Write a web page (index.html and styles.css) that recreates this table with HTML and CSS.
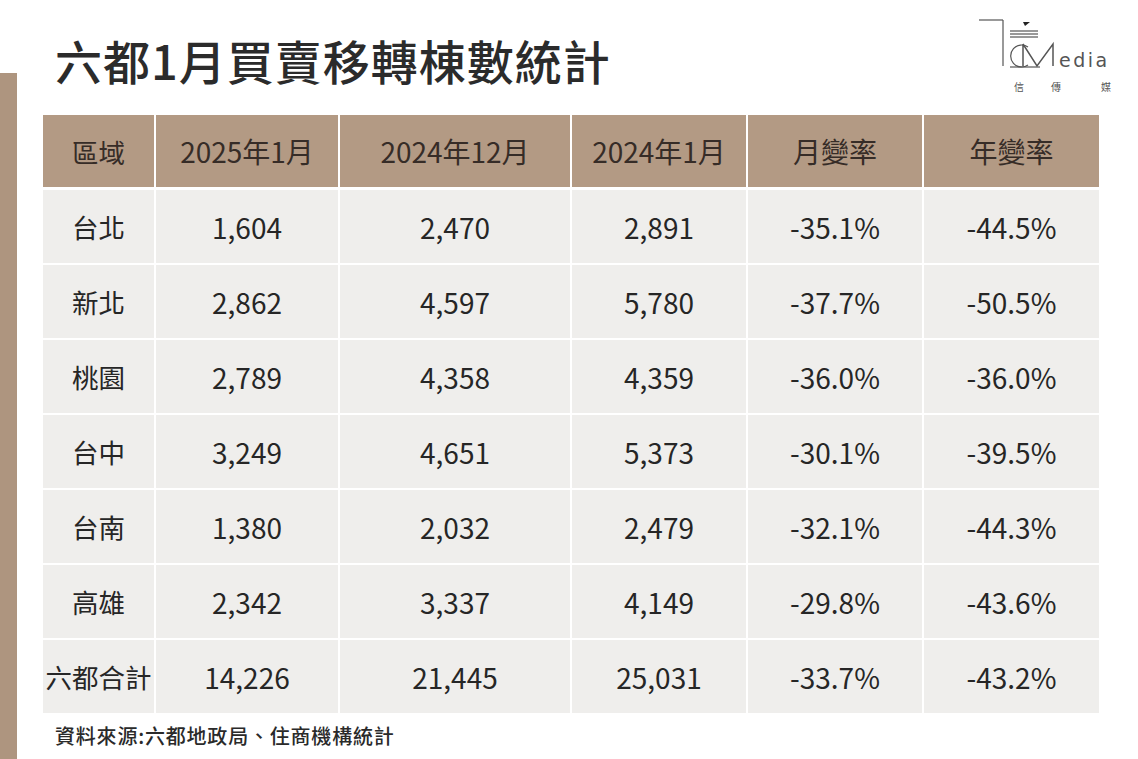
FILE: index.html
```html
<!DOCTYPE html>
<html lang="zh-Hant">
<head>
<meta charset="utf-8">
<title>六都1月買賣移轉棟數統計</title>
<link rel="stylesheet" href="styles.css">
</head>
<body>
<div class="page">
  <div class="side-bar"></div>
  <main class="main">
    <header class="head">
      <h1 class="title">六都1月買賣移轉棟數統計</h1>
      <div class="logo">
        <svg width="140" height="82" viewBox="0 0 140 82" xmlns="http://www.w3.org/2000/svg">
          <g stroke="#555" fill="none" stroke-width="1.2">
            <line x1="3" y1="7" x2="27" y2="7"/>
            <line x1="27" y1="7" x2="27" y2="53"/>
            <line x1="34" y1="18" x2="62" y2="18"/>
            <line x1="34" y1="21" x2="62" y2="21"/>
            <line x1="34" y1="24" x2="62" y2="24"/>
            <path d="M52 34 A11 11 0 1 0 52 52"/>
            <path d="M47 31 L47 53 M47 31 L61 53 L77 31 L77 53" stroke-width="1.5"/>
            <line x1="34" y1="54" x2="64" y2="54"/>
          </g>
          <path d="M47 9 L54 9 L49 13 Z" fill="#222"/>
          <text x="83" y="54" class="logo-en">edia</text>
          <text x="38" y="78" class="logo-zh">信</text>
          <text x="75" y="78" class="logo-zh">傳</text>
          <text x="125" y="78" class="logo-zh">媒</text>
        </svg>
      </div>
    </header>
    <table class="stats">
      <colgroup>
        <col class="c-area"><col class="c-a"><col class="c-b"><col class="c-c"><col class="c-d"><col class="c-e">
      </colgroup>
      <thead>
        <tr><th>區域</th><th>2025年1月</th><th>2024年12月</th><th>2024年1月</th><th>月變率</th><th>年變率</th></tr>
      </thead>
      <tbody>
        <tr><td>台北</td><td>1,604</td><td>2,470</td><td>2,891</td><td>-35.1%</td><td>-44.5%</td></tr>
        <tr><td>新北</td><td>2,862</td><td>4,597</td><td>5,780</td><td>-37.7%</td><td>-50.5%</td></tr>
        <tr><td>桃園</td><td>2,789</td><td>4,358</td><td>4,359</td><td>-36.0%</td><td>-36.0%</td></tr>
        <tr><td>台中</td><td>3,249</td><td>4,651</td><td>5,373</td><td>-30.1%</td><td>-39.5%</td></tr>
        <tr><td>台南</td><td>1,380</td><td>2,032</td><td>2,479</td><td>-32.1%</td><td>-44.3%</td></tr>
        <tr><td>高雄</td><td>2,342</td><td>3,337</td><td>4,149</td><td>-29.8%</td><td>-43.6%</td></tr>
        <tr><td>六都合計</td><td>14,226</td><td>21,445</td><td>25,031</td><td>-33.7%</td><td>-43.2%</td></tr>
      </tbody>
    </table>
    <p class="source">資料來源:六都地政局、住商機構統計</p>
  </main>
</div>
</body>
</html>
```
FILE: styles.css
```css
html, body {
  margin: 0;
  padding: 0;
  background: #ffffff;
}
body {
  font-family: "Noto Sans CJK TC", "Noto Sans", sans-serif;
  color: #2a2a2a;
}
.page {
  display: flex;
  width: 1138px;
  height: 759px;
  overflow: hidden;
}
.side-bar {
  flex: 0 0 17px;
  margin-top: 73px;
  background: #ae957f;
}
.main {
  flex: 1;
  padding-left: 26px;
  display: flex;
  flex-direction: column;
}
.head {
  height: 115px;
  display: flex;
  justify-content: space-between;
  align-items: flex-start;
  width: 1056px;
}
.title {
  margin: 28px 0 0 12px;
  font-size: 47px;
  line-height: 64px;
  font-weight: 500;
  color: #2b2b2b;
  letter-spacing: 1px;
}
.logo {
  margin-top: 13px;
  margin-right: -17px;
  line-height: 0;
}
.logo-en {
  font-family: "DejaVu Sans", sans-serif;
  font-size: 19px;
  fill: #555;
  letter-spacing: 2.5px;
}
.logo-zh {
  font-family: "Noto Sans CJK TC", serif;
  font-size: 10px;
  fill: #555;
}
.stats {
  border-collapse: collapse;
  width: 1056px;
  table-layout: fixed;
}
.c-area { width: 112px; }
.c-a { width: 184px; }
.c-b { width: 232px; }
.c-c { width: 176px; }
.c-d { width: 176px; }
.c-e { width: 176px; }
.stats th, .stats td {
  border: 2px solid #ffffff;
  text-align: center;
  padding: 0;
  font-size: 28px;
  font-weight: 400;
  white-space: nowrap;
}
.stats tr > :first-child {
  border-left: 0;
  font-size: 26.5px;
}
.stats tr > :last-child { border-right: 0; }
.stats thead tr > * { border-top: 0; }
.stats tbody tr:last-child > * { border-bottom: 0; }
.stats th {
  background: #b39a84;
  color: #362c27;
  height: 72px;
  border-bottom-width: 3px;
}
.stats td {
  background: #efeeec;
  color: #262626;
  height: 73px;
}
.source {
  margin: 8px 0 0 12px;
  font-size: 20px;
  font-weight: 500;
  color: #2a2a2a;
  letter-spacing: 0.8px;
}
```
